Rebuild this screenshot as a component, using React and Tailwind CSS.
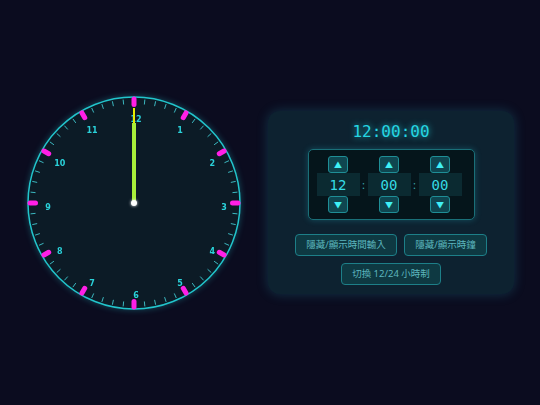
import React from "react";

const CX = 108;
const CY = 108;

function polar(r, deg, ox = 0, oy = 0) {
  const a = (deg * Math.PI) / 180;
  return [CX + ox + r * Math.sin(a), CY + oy - r * Math.cos(a)];
}

function Clock() {
  const ticks = [];
  for (let i = 0; i < 60; i++) {
    const deg = i * 6;
    if (i % 5 === 0) {
      const [x1, y1] = polar(98.5, deg);
      const [x2, y2] = polar(104, deg);
      ticks.push(
        <line key={i} x1={x1} y1={y1} x2={x2} y2={y2} stroke="#ff1fe6" strokeWidth="5" strokeLinecap="round" />
      );
    } else {
      const [x1, y1] = polar(99, deg);
      const [x2, y2] = polar(104, deg);
      ticks.push(<line key={i} x1={x1} y1={y1} x2={x2} y2={y2} stroke="#3bb8c0" strokeWidth="1" />);
    }
  }
  const nums = [];
  for (let h = 1; h <= 12; h++) {
    const [x, y] = polar(88, h * 30, 2, 4);
    nums.push(
      <text
        key={h}
        x={x}
        y={y}
        textAnchor="middle"
        dominantBaseline="central"
        fontSize="8"
        fontWeight="700"
        fill="#2ad2da"
        fontFamily="'DejaVu Sans', sans-serif"
      >
        {h}
      </text>
    );
  }
  return (
    <svg width="216" height="216" viewBox="0 0 216 216" className="shrink-0" style={{ filter: "drop-shadow(0 0 3px rgba(34,200,210,0.35))" }}>
      <defs>
        <filter id="glow" x="-50%" y="-50%" width="200%" height="200%">
          <feGaussianBlur stdDeviation="1.5" result="b" />
          <feMerge>
            <feMergeNode in="b" />
            <feMergeNode in="SourceGraphic" />
          </feMerge>
        </filter>
        <filter id="soft" x="-200%" y="-10%" width="500%" height="120%">
          <feGaussianBlur stdDeviation="1.8" />
        </filter>
      </defs>
      <circle cx={CX} cy={CY} r="106" fill="#0c1b26" stroke="#22c5cc" strokeWidth="1.5" />
      {ticks}
      {nums}
      <line x1={CX} y1={CY} x2={CX} y2={CY - 95} stroke="#e6ee00" strokeWidth="2" />
      <line x1={CX} y1={CY} x2={CX} y2={CY - 78} stroke="#b890f8" strokeWidth="8" filter="url(#soft)" />
      <line x1={CX} y1={CY} x2={CX} y2={CY - 80} stroke="#a8ef3a" strokeWidth="4" />
      <circle cx={CX} cy={CY} r="3" fill="#ffffff" filter="url(#glow)" />
    </svg>
  );
}

const digital = { fontFamily: "'DejaVu Sans Mono', monospace" };

function Spinner({ value }) {
  return (
    <div className="flex flex-col items-center">
      <button className="w-5 h-[17px] flex items-center justify-center rounded-[3px] border border-[#1f8e96] bg-[#0f4650] text-[8px] text-[#3ff0f6] leading-none">
        ▲
      </button>
      <div
        className="w-[43px] h-[23px] flex items-center justify-center bg-[#0b2a31] text-[14px] text-[#35dbe4] leading-none"
        style={digital}
      >
        {value}
      </div>
      <button className="w-5 h-[17px] flex items-center justify-center rounded-[3px] border border-[#1f8e96] bg-[#0f4650] text-[8px] text-[#3ff0f6] leading-none">
        ▼
      </button>
    </div>
  );
}

function Colon() {
  return <div className="w-2 text-center text-[11px] text-[#3aa8b0] leading-none">:</div>;
}

const btn =
  "h-[22px] flex items-center justify-center whitespace-nowrap rounded-[4px] border border-[#1d7f88] bg-[#0e3942] text-[9.5px] text-[#5cb6be] px-1 leading-none";

export default function App() {
  return (
    <div
      className="w-[540px] h-[405px] bg-[#0b0c1f] flex items-center justify-center gap-[26px]"
      style={{ fontFamily: "'Noto Sans', 'Noto Sans CJK TC', sans-serif" }}
    >
      <Clock />
      <div className="w-[246px] h-[183px] rounded-xl bg-[#0d2230] shadow-[0_0_12px_rgba(40,170,200,0.25)] flex flex-col items-center pt-[10px]">
        <div
          className="text-[16px] leading-[22px] text-[#25d6e2]"
          style={{ ...digital, textShadow: "0 0 6px rgba(37,214,226,0.8)" }}
        >
          12:00:00
        </div>
        <div className="mt-[6px] w-[167px] h-[71px] rounded-[5px] border border-[#1a6f78] bg-[#05151b] shadow-[0_0_6px_rgba(40,190,210,0.3)] flex items-center justify-start pl-[8px]">
          <Spinner value="12" />
          <Colon />
          <Spinner value="00" />
          <Colon />
          <Spinner value="00" />
        </div>
        <div className="mt-[14px] flex gap-[7px]">
          <button className={btn + " w-[102px]"}>隱藏/顯示時間輸入</button>
          <button className={btn + " w-[83px]"}>隱藏/顯示時鐘</button>
        </div>
        <div className="mt-[7px] flex">
          <button className={btn + " w-[100px]"}>切換 12/24 小時制</button>
        </div>
      </div>
    </div>
  );
}
